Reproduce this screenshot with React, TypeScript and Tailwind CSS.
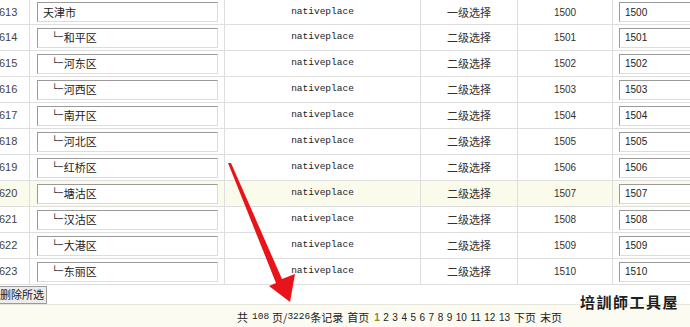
import React from 'react';

const rows = [
  { id: '613', name: '天津市', level: '一级选择', code: '1500', child: false },
  { id: '614', name: '和平区', level: '二级选择', code: '1501', child: true },
  { id: '615', name: '河东区', level: '二级选择', code: '1502', child: true },
  { id: '616', name: '河西区', level: '二级选择', code: '1503', child: true },
  { id: '617', name: '南开区', level: '二级选择', code: '1504', child: true },
  { id: '618', name: '河北区', level: '二级选择', code: '1505', child: true },
  { id: '619', name: '红桥区', level: '二级选择', code: '1506', child: true },
  { id: '620', name: '塘沽区', level: '二级选择', code: '1507', child: true, hl: true },
  { id: '621', name: '汉沽区', level: '二级选择', code: '1508', child: true },
  { id: '622', name: '大港区', level: '二级选择', code: '1509', child: true },
  { id: '623', name: '东丽区', level: '二级选择', code: '1510', child: true },
];

const cjk = { fontFamily: '"Noto Sans CJK SC", "Liberation Sans", sans-serif' };
const mono = { fontFamily: '"Liberation Mono", "DejaVu Sans Mono", monospace' };
const sans = { fontFamily: '"Liberation Sans", "DejaVu Sans", sans-serif' };

const App: React.FC = () => {
  return (
    <div className="relative w-[690px] h-[327px] bg-white overflow-hidden text-[#333]">
      {/* Table rows */}
      <div className="flex flex-col">
        {rows.map((r, i) => (
          <div
            key={r.id}
            className={`grid grid-cols-[30px_195px_196px_97px_95px_1fr] ${i === 0 ? 'h-[25px]' : 'h-[26px]'} border-b border-[#dedede] ${r.hl ? 'bg-[#fbfbec]' : 'bg-white'}`}
          >
            <div className="flex items-center border-r border-[#dedede] text-[11px] text-[#444] overflow-hidden" style={sans}>
              <span className="-ml-[1px]">{r.id}</span>
            </div>
            <div className="flex items-center pl-[7px] border-r border-[#dedede]">
              <div
                className={`w-[181px] h-[20px] bg-white border border-t-[#9a9a9a] border-l-[#9a9a9a] border-b-[#dcdcdc] border-r-[#dcdcdc] flex items-center ${r.child ? 'pl-[14px]' : 'pl-[5px]'} text-[11px] text-[#222] whitespace-nowrap`}
                style={cjk}
              >
                {r.child && (
                  <span className="text-[9px] leading-none mr-[1px]" style={{ fontFamily: '"DejaVu Sans Mono", monospace' }}>
                    └─
                  </span>
                )}
                {r.name}
              </div>
            </div>
            <div className="flex items-center justify-center border-r border-[#dedede] text-[9.5px] text-[#222]" style={mono}>
              nativeplace
            </div>
            <div className="flex items-center justify-center border-r border-[#dedede] text-[11px] text-[#333]" style={cjk}>
              {r.level}
            </div>
            <div className="flex items-center justify-center border-r border-[#dedede] text-[10px] text-[#333]" style={sans}>
              {r.code}
            </div>
            <div className="flex items-center pl-[6px]">
              <div
                className="w-[90px] h-[20px] bg-white border border-t-[#9a9a9a] border-l-[#9a9a9a] border-b-[#dcdcdc] border-r-[#dcdcdc] flex items-center pl-[5px] text-[10px] text-[#222]"
                style={sans}
              >
                {r.code}
              </div>
            </div>
          </div>
        ))}
      </div>

      {/* Action row */}
      <div className="h-[20px] flex items-center bg-white border-b border-[#e6e6da]">
        <button
          className="h-[18px] px-[2px] -ml-[3px] bg-[#ececec] border border-[#9a9a9a] text-[11px] leading-none text-[#222]"
          style={cjk}
        >
          删除所选
        </button>
      </div>

      {/* Pager */}
      <div className="h-[24px] bg-[#fbfbf1] flex items-center pl-[237px] text-[11px] text-[#222] whitespace-nowrap" style={cjk}>
        <span>共</span>
        <span className="ml-[4px] text-[9.5px]" style={mono}>108</span>
        <span className="ml-[3px]">页/</span>
        <span className="text-[9.5px]" style={mono}>3226</span>
        <span>条记录</span>
        <span className="ml-[4px]">首页</span>
        <div className="flex gap-[3.5px] ml-[5px] text-[10px]" style={sans}>
          <span className="text-[#8a8a2e] font-bold">1</span>
          {['2', '3', '4', '5', '6', '7', '8', '9', '10', '11', '12', '13'].map((n) => (
            <span key={n}>{n}</span>
          ))}
        </div>
        <span className="ml-[4px]">下页</span>
        <span className="ml-[4px]">末页</span>
      </div>

      {/* Watermark */}
      <div
        className="absolute left-[580px] top-[294px] text-[15px] leading-none font-bold tracking-[1.5px] whitespace-nowrap text-[#1e1e1e]"
        style={{ fontFamily: '"Noto Sans CJK TC", "Noto Sans CJK SC", serif' }}
      >
        培訓師工具屋
      </div>

      {/* Red arrow */}
      <svg className="absolute left-0 top-0 pointer-events-none" width="690" height="327">
        <polygon
          points="228,163 231,163 282,279 295,274 290,302 269,286 276,283"
          fill="#e8141a"
        />
      </svg>
    </div>
  );
};

export default App;
